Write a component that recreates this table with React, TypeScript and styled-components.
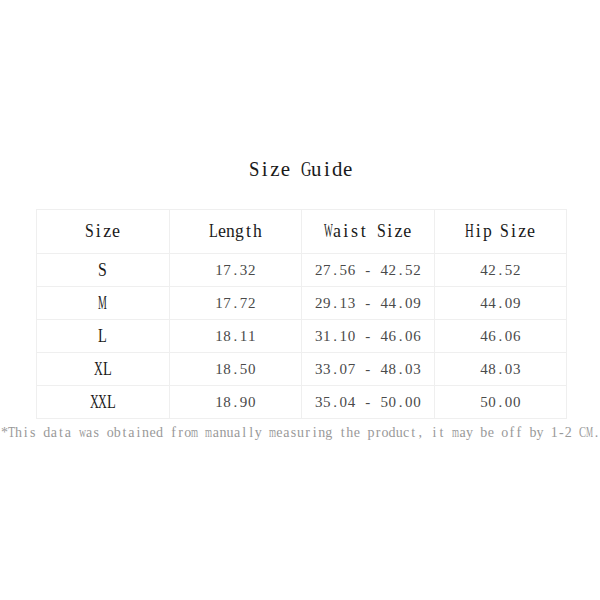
import React from "react";
import styled, { createGlobalStyle } from "styled-components";

const Global = createGlobalStyle`
  html, body { margin: 0; padding: 0; background: #fff; }
  body { font-family: "Liberation Serif", "Noto Sans CJK SC", serif; }
`;

const Page = styled.div`
  width: 600px;
  height: 600px;
  display: flex;
  flex-direction: column;
  align-items: center;
  padding-top: 156px;
  box-sizing: border-box;
`;

const Title = styled.h1`
  margin: 0 0 27px 0;
  font-size: 21px;
  font-weight: normal;
  color: #1a1a1a;
  line-height: 26px;
  padding-left: 2px;
`;

const Table = styled.table`
  width: 531px;
  margin-left: 3px;
  border-collapse: collapse;
  table-layout: fixed;
`;

const Th = styled.th`
  height: 43px;
  border: 1px solid #efefef;
  font-size: 18px;
  font-weight: normal;
  color: #1a1a1a;
  text-align: center;
  padding: 0;
`;

const Td = styled.td<{ $strong?: boolean }>`
  height: 32px;
  border: 1px solid #efefef;
  font-size: ${(p) => (p.$strong ? "18px" : "15px")};
  color: ${(p) => (p.$strong ? "#1a1a1a" : "#4a4a4a")};
  text-align: center;
  padding: 0;
`;

const Note = styled.p`
  align-self: flex-start;
  margin: 5px 0 0 0;
  font-size: 14px;
  color: #999;
  white-space: nowrap;
  line-height: 17px;
  padding-left: 1px;
`;

const Cell = styled.span<{ $cell: number }>`
  display: inline-flex;
  justify-content: center;
  width: ${(p) => p.$cell}px;
  white-space: pre;
`;

const W: Record<string, number> = {
  a: 0.444, b: 0.5, c: 0.444, d: 0.5, e: 0.444, f: 0.333, g: 0.5, h: 0.5, i: 0.278,
  j: 0.278, k: 0.5, l: 0.278, m: 0.778, n: 0.5, o: 0.5, p: 0.5, q: 0.5, r: 0.333,
  s: 0.389, t: 0.278, u: 0.5, v: 0.5, w: 0.722, x: 0.5, y: 0.5, z: 0.444,
  C: 0.667, G: 0.722, H: 0.722, L: 0.611, M: 0.889, S: 0.556, T: 0.611, W: 0.944, X: 0.722,
  ".": 0.25, ",": 0.25, "-": 0.333, "*": 0.5, " ": 0.25,
};

function Mono({ text, cell, fs }: { text: string; cell: number; fs: number }) {
  return (
    <>
      {[...text].map((ch, i) => {
        const w = (W[ch] ?? 0.5) * fs;
        const s = Math.min(1, (1.0 * cell) / w);
        return (
          <Cell
            key={i}
            $cell={cell}
            style={s < 1 ? { transform: `scaleX(${s.toFixed(3)})` } : undefined}
          >
            {ch === " " ? "\u00a0" : ch}
          </Cell>
        );
      })}
    </>
  );
}

const rows = [
  ["S", "17.32", "27.56 - 42.52", "42.52"],
  ["M", "17.72", "29.13 - 44.09", "44.09"],
  ["L", "18.11", "31.10 - 46.06", "46.06"],
  ["XL", "18.50", "33.07 - 48.03", "48.03"],
  ["XXL", "18.90", "35.04 - 50.00", "50.00"],
];

const heads = ["Size", "Length", "Waist Size", "Hip Size"];

export default function App() {
  return (
    <>
      <Global />
      <Page>
        <Title>
          <Mono text="Size Guide" cell={10.4} fs={21} />
        </Title>
        <Table>
          <thead>
            <tr>
              {heads.map((h) => (
                <Th key={h}>
                  <Mono text={h} cell={8.8} fs={18} />
                </Th>
              ))}
            </tr>
          </thead>
          <tbody>
            {rows.map((r) => (
              <tr key={r[0]}>
                <Td $strong>
                  <Mono text={r[0]} cell={8.8} fs={18} />
                </Td>
                {r.slice(1).map((v, i) => (
                  <Td key={i}>
                    <Mono text={v} cell={8.2} fs={15} />
                  </Td>
                ))}
              </tr>
            ))}
          </tbody>
        </Table>
        <Note>
          <Mono
            text="*This data was obtained from manually measuring the product, it may be off by 1-2 CM."
            cell={7.05}
            fs={14}
          />
        </Note>
      </Page>
    </>
  );
}
